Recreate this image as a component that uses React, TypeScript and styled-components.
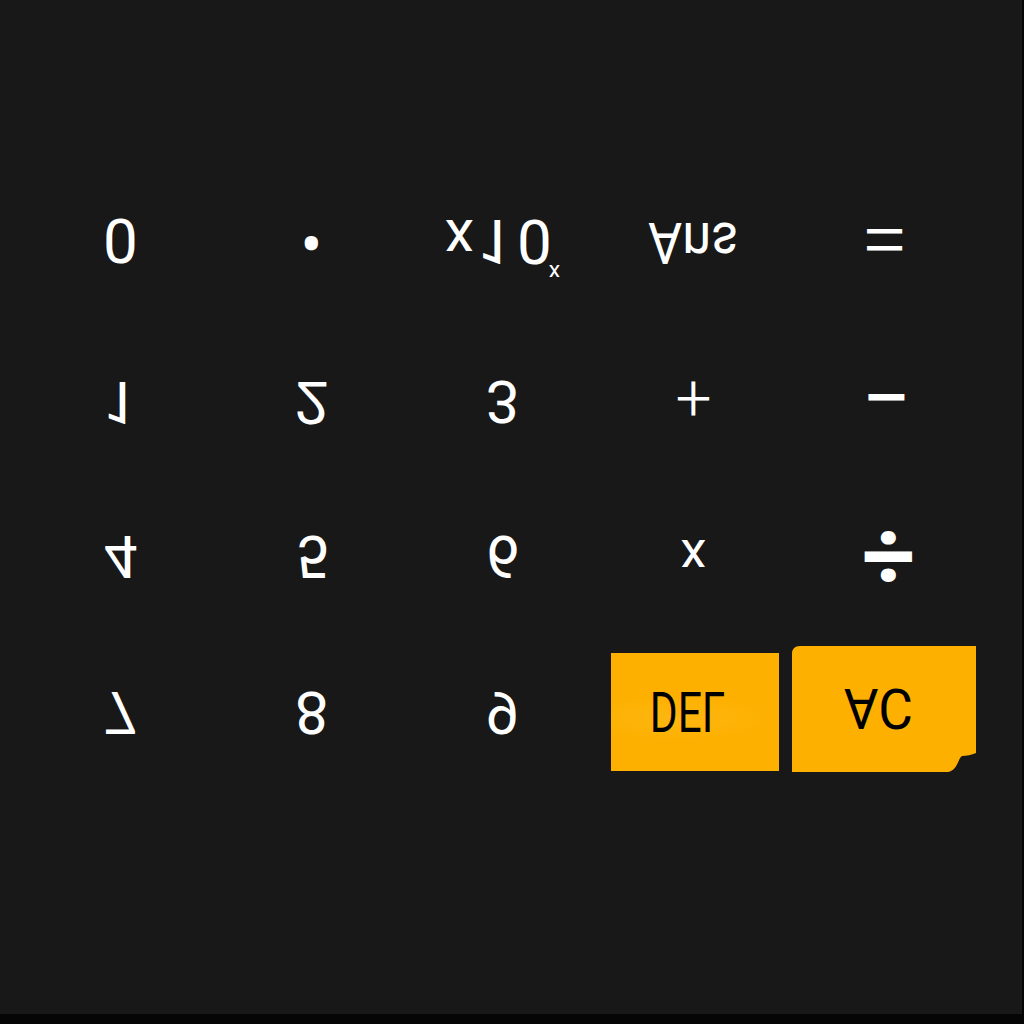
import React from "react";
import styled, { createGlobalStyle } from "styled-components";

const GlobalStyle = createGlobalStyle`
  html, body {
    margin: 0;
    padding: 0;
    background: #050505;
  }
  body {
    font-family: Roboto, "Open Sans", "Liberation Sans", sans-serif;
  }
`;

const Screen = styled.div`
  width: 1022px;
  height: 1014px;
  background: #181818;
  overflow: hidden;
`;

const Pad = styled.div`
  display: grid;
  grid-template-columns: repeat(5, 191px);
  grid-template-rows: 158px 168px 140px 172px;
  padding: 160px 0 0 25px;
`;

const Key = styled.div`
  display: flex;
  align-items: center;
  justify-content: center;
  color: #ffffff;
`;

const Label = styled.span<{ $size?: number; $weight?: number; $sx?: number; $dy?: number; $dx?: number; $color?: string }>`
  display: inline-block;
  font-size: ${(p) => p.$size ?? 60}px;
  font-weight: ${(p) => p.$weight ?? 400};
  line-height: 1;
  color: ${(p) => p.$color ?? "#ffffff"};
  transform: translate(${(p) => p.$dx ?? 0}px, ${(p) => p.$dy ?? 0}px) scale(${(p) => p.$sx ?? 1}, -1);
  white-space: nowrap;
`;

const Sup = styled.sup`
  font-size: 0.37em;
  line-height: 0;
  vertical-align: 0;
  position: relative;
  top: -1.95em;
  margin-left: -3px;
`;

const LeadX = styled.span`
  font-size: 0.95em;
  margin-right: 4px;
`;

const Zero = styled.span`
  margin-left: 4px;
`;

const DelKey = styled.div`
  align-self: start;
  justify-self: start;
  margin: 27px 0 0 13px;
  width: 168px;
  height: 118px;
  display: flex;
  align-items: center;
  justify-content: center;
  background:
    radial-gradient(ellipse 90px 22px at 40% 55%, rgba(255, 220, 110, 0.16), rgba(255, 220, 110, 0) 100%),
    #fdb000;
`;

const AcKey = styled.div`
  align-self: start;
  justify-self: start;
  margin: 20px 0 0 3px;
  width: 184px;
  height: 126px;
  display: flex;
  align-items: center;
  justify-content: center;
  background: #fdb000;
  clip-path: path("M8 0 H184 V107 C180 109 174 110 170 110 C166 112 166 124 156 126 H0 V8 Q0 0 8 0 Z");
`;

type K = { label: React.ReactNode; size?: number; weight?: number; sx?: number; dy?: number; dx?: number };

const rows: K[][] = [
  [
    { label: "0", size: 62, dy: 1 },
    { label: "•", size: 66, dy: 1 },
    {
      label: (
        <>
          <LeadX>x</LeadX>1<Zero>0</Zero>
          <Sup>x</Sup>
        </>
      ),
      size: 62,
      dy: 2,
    },
    { label: "Ans", size: 57, sx: 0.92, dy: 3 },
    { label: "=", size: 86, weight: 300, dy: 2 },
  ],
  [
    { label: "1", size: 60 },
    { label: "2", size: 60 },
    { label: "3", size: 60, dy: -1 },
    { label: "+", size: 64, weight: 300, dy: -4 },
    { label: "−", size: 88, weight: 400, dy: -6, dx: 2 },
  ],
  [
    { label: "4", size: 60 },
    { label: "5", size: 60 },
    { label: "6", size: 60 },
    { label: "x", size: 52, dy: 1 },
    { label: "÷", size: 94, weight: 700, dy: 1, dx: 4 },
  ],
  [
    { label: "7", size: 60 },
    { label: "8", size: 60 },
    { label: "9", size: 60 },
  ],
];

export default function App() {
  return (
    <>
      <GlobalStyle />
      <Screen>
        <Pad>
          {rows.map((row, ri) =>
            row.map((k, ci) => (
              <Key key={`${ri}-${ci}`}>
                <Label $size={k.size} $weight={k.weight} $sx={k.sx} $dy={k.dy} $dx={k.dx}>
                  {k.label}
                </Label>
              </Key>
            ))
          )}
          <DelKey>
            <Label $size={56} $weight={400} $sx={0.76} $color="#000000" $dx={-8} $dy={-1}>
              DEL
            </Label>
          </DelKey>
          <AcKey>
            <Label $size={56} $weight={400} $sx={0.95} $color="#000000" $dx={-6} $dy={-1}>
              AC
            </Label>
          </AcKey>
        </Pad>
      </Screen>
    </>
  );
}
